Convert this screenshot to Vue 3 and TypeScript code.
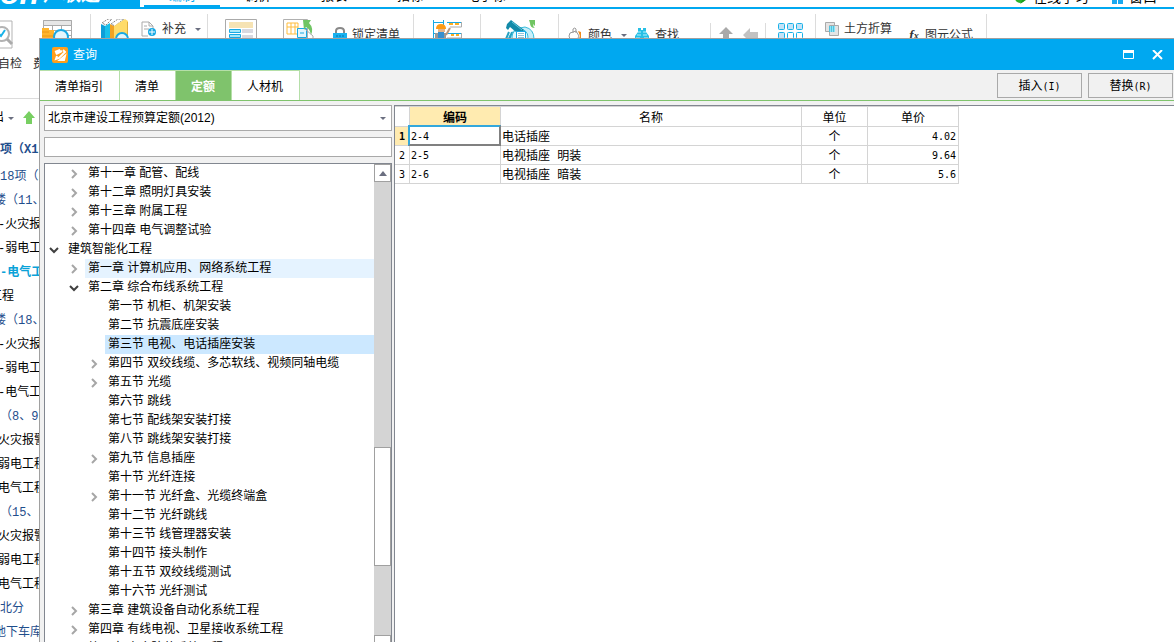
<script setup lang="ts">
import { ref } from 'vue'

interface TreeNode {
  label: string
  level: number
  state: 'open' | 'closed' | 'leaf'
  mark?: 'hover' | 'selected'
}

interface QuotaRow {
  code: string
  name: string
  unit: string
  price: string
}

const menus: string[] = ['编制', '调价', '报表', '指标', '电子标']
const tabs: string[] = ['清单指引', '清单', '定额', '人材机']
const activeTab = ref('定额')
const keyword = ref('')
const library = ref('北京市建设工程预算定额(2012)')

const projectRows: { text: string; kind: string }[] = [
  { text: '项（X1）', kind: 'root' },
  { text: '18项（1）', kind: 'blue' },
  { text: '楼（11、12）', kind: 'blue cut' },
  { text: '-火灾报警', kind: 'dash' },
  { text: '-弱电工程', kind: 'dash' },
  { text: '-电气工程', kind: 'current' },
  { text: '工程', kind: 'deep' },
  { text: '楼（18、19）', kind: 'blue cut' },
  { text: '-火灾报警', kind: 'dash' },
  { text: '-弱电工程', kind: 'dash' },
  { text: '-电气工程', kind: 'dash' },
  { text: '（8、9）', kind: 'blue' },
  { text: '火灾报警', kind: 'dash' },
  { text: '弱电工程', kind: 'dash' },
  { text: '电气工程', kind: 'dash' },
  { text: '（15、16）', kind: 'blue' },
  { text: '火灾报警', kind: 'dash' },
  { text: '弱电工程', kind: 'dash' },
  { text: '电气工程', kind: 'dash' },
  { text: '北分', kind: 'blue' },
  { text: '地下车库', kind: 'blue cut' },
]

const nodes: TreeNode[] = [
  { label: '第十一章 配管、配线', level: 1, state: 'closed' },
  { label: '第十二章 照明灯具安装', level: 1, state: 'closed' },
  { label: '第十三章 附属工程', level: 1, state: 'closed' },
  { label: '第十四章 电气调整试验', level: 1, state: 'closed' },
  { label: '建筑智能化工程', level: 0, state: 'open' },
  { label: '第一章 计算机应用、网络系统工程', level: 1, state: 'closed', mark: 'hover' },
  { label: '第二章 综合布线系统工程', level: 1, state: 'open' },
  { label: '第一节 机柜、机架安装', level: 2, state: 'leaf' },
  { label: '第二节 抗震底座安装', level: 2, state: 'leaf' },
  { label: '第三节 电视、电话插座安装', level: 2, state: 'leaf', mark: 'selected' },
  { label: '第四节 双绞线缆、多芯软线、视频同轴电缆', level: 2, state: 'closed' },
  { label: '第五节 光缆', level: 2, state: 'closed' },
  { label: '第六节 跳线', level: 2, state: 'leaf' },
  { label: '第七节 配线架安装打接', level: 2, state: 'leaf' },
  { label: '第八节 跳线架安装打接', level: 2, state: 'leaf' },
  { label: '第九节 信息插座', level: 2, state: 'closed' },
  { label: '第十节 光纤连接', level: 2, state: 'leaf' },
  { label: '第十一节 光纤盒、光缆终端盒', level: 2, state: 'closed' },
  { label: '第十二节 光纤跳线', level: 2, state: 'leaf' },
  { label: '第十三节 线管理器安装', level: 2, state: 'leaf' },
  { label: '第十四节 接头制作', level: 2, state: 'leaf' },
  { label: '第十五节 双绞线缆测试', level: 2, state: 'leaf' },
  { label: '第十六节 光纤测试', level: 2, state: 'leaf' },
  { label: '第三章 建筑设备自动化系统工程', level: 1, state: 'closed' },
  { label: '第四章 有线电视、卫星接收系统工程', level: 1, state: 'closed' },
  { label: '第五章 安全防范系统工程', level: 1, state: 'closed' },
]

const rows: QuotaRow[] = [
  { code: '2-4', name: '电话插座', unit: '个', price: '4.02' },
  { code: '2-5', name: '电视插座 明装', unit: '个', price: '9.64' },
  { code: '2-6', name: '电视插座 暗装', unit: '个', price: '5.6' },
]
</script>

<template>
  <div class="app">
    <header class="top">
      <div class="brand"><span class="latin">on</span><span>广联达</span></div>
      <nav class="menus">
        <button v-for="(m, i) in menus" :key="m" :class="{ on: i === 0 }">{{ m }}</button>
      </nav>
      <div class="aside">
        <svg width="14" height="12" viewBox="0 0 14 12"><circle cx="6" cy="6" r="5" fill="#2bb32b" /><path d="M6 12l6-4 1-4-4 3z" fill="#1b9a1b" /></svg>
        <button>在线学习</button>
        <svg class="win" width="12" height="12" viewBox="0 0 12 12"><path d="M0 0h5v5H0zM6 0h5v5H6zM0 7h5v5H0zM6 7h5v5H6z" fill="#19a9f0" /></svg>
        <button>窗口</button>
      </div>
    </header>

    <div class="ribbon">
      <div class="group check">
        <button class="big">
          <svg width="32" height="32" viewBox="0 0 32 32"><path d="M1 2h29v27H1z" fill="#fff" stroke="#b3b3b3" /><circle cx="20" cy="15" r="7" fill="#fff" stroke="#b3b3b3" stroke-width="2" /><path d="M25 20l5 5" stroke="#aaa" stroke-width="3" /><path d="M16 14l3 3 4-6" fill="none" stroke="#18b2e8" stroke-width="2" /></svg>
          <span>项目自检</span>
        </button>
        <button class="big">
          <svg width="32" height="32" viewBox="0 0 32 32"><path d="M2.500 1.500h28v26h-28z" fill="#fff" stroke="#aaa" /><path d="M2.500 1.500h28v5h-28z" fill="#e6e6e6" stroke="#aaa" /><path d="M2 11.500h28M2 16.500h28M11.500 7v20M20.500 7v20" stroke="#aaa" /><path d="M1 9h7v2h5v10H1z" fill="#ffb52e" /><path d="M1 13h7M1 17h12" stroke="#ee9612" /><circle cx="20" cy="18" r="7" fill="#e4f6fd" stroke="#18a9e4" stroke-width="2" /></svg>
          <span>费用查看</span>
        </button>
      </div>
      <div class="group books">
        <svg width="30" height="32" viewBox="0 0 30 32"><path d="M0 5l4 2v24H0z" fill="#0d9ed8" /><path d="M4 7l5-3v27H4z" fill="#18c0ea" /><path d="M9 5l4 2v24H9z" fill="#f2a322" /><path d="M1 4l6-4h4L5 6zM10 5l7-5h6l-9 7z" fill="#fff" stroke="#888" stroke-dasharray="2 1" /><path d="M13 7L24 0l3 2v29H13z" fill="#ffdb69" /><path d="M26.500 3v27" stroke="#e0ae3c" /><circle cx="21" cy="20" r="6" fill="#e4f6fd" stroke="#18a9e4" stroke-width="2" /></svg>
        <button class="small add">
          <svg width="16" height="16" viewBox="0 0 16 16"><path d="M1 1h7l4 4v3M1 1v14h6M8 1v4h4M3 5h3M3 8h5" fill="none" stroke="#aaa" /><circle cx="11" cy="11" r="4" fill="#18a9e4" /><path d="M11 8v6M8 11h6" stroke="#fff" /></svg>
          <span>补充</span><i class="caret"></i>
        </button>
      </div>
      <div class="group list">
        <svg width="32" height="32" viewBox="0 0 32 32"><path d="M.5.5h31v31H.5z" fill="#fff" stroke="#aaa" /><path d="M4 3h24v6H4z" fill="#f6e3b4" /><path d="M17 10h11v4H17zM17 16h11v4H17z" fill="#d9d9e0" /><path d="M4.500 10.500h11v3h-11zM4.500 15.500h11v3h-11z" fill="#a4e8fa" stroke="#18a9e4" /></svg>
        <svg class="export" width="32" height="32" viewBox="0 0 32 32"><path d="M.5.5h24v30H.5z" fill="#fff" stroke="#b0b0b0" /><path d="M4 4h11v11H4zM4 8h11M8 4v11M12 4v11" fill="none" stroke="#ffbd3d" /><path d="M14.500 9.500h9v9h-9zM17 14h4" fill="#e4f6fd" stroke="#18a9e4" /><path d="M20 1h8l-2 3q5 5 2 12q-1-6-5-8l-2 3z" fill="#70c563" /><path d="M22 10l8 7v12" fill="none" stroke="#aaa" /></svg>
        <button class="small low">
          <svg width="14" height="16" viewBox="0 0 14 16"><path d="M3 7V4q0-3 4-3t4 3v3" fill="none" stroke="#888" stroke-width="2" /><path d="M0 6h14v10H0z" fill="#18b2f0" /><path d="M3 9h2M6 9h2M9 9h2" stroke="#0c71a8" /></svg>
          <span>锁定清单</span>
        </button>
      </div>
      <div class="group worker">
        <svg width="30" height="32" viewBox="0 0 30 32"><path d="M.5 1v30M10.500 1v8M1 3.500h9M1 14.500h4M14 3.500h14M14 14.500h14" fill="none" stroke="#18a9e4" /><path d="M28.500 3v5H17M28.500 14v5H14" fill="none" stroke="#aaa" /><path d="M16 5h4M22 5h4M18 16h3M23 16h3" stroke="#ffad20" stroke-width="2" /><path d="M3 10q0-5 5-5t5 5z" fill="#ff9b16" /><path d="M5 10h7v3H5z" fill="#e3b48c" /><path d="M2 14h11v12H2z" fill="#999" /><path d="M5 13h6v13H5z" fill="#368fcf" /><path d="M13 16l4-7" stroke="#bb967c" stroke-width="2" /></svg>
      </div>
      <div class="group phone">
        <svg width="32" height="32" viewBox="0 0 32 32"><path d="M3 20Q7 9 20 8q9 2 9 12v10H3z" fill="#c7effa" stroke="#37bcdc" /><circle cx="15" cy="18" r="8" fill="#e3f8fd" stroke="#37bcdc" /><path d="M4 13l-3 7M7 13l-3 8" stroke="#26a2c2" stroke-width="2" /><path d="M2 5L6 1l13 10-3 4-5-2-6-5-2 3-2-2z" fill="#138aa8" /><path d="M7 3l10 8" stroke="#5fc8dc" /><path d="M11.500 12.500h9v15h-9z" fill="#fff" stroke="#18a9e4" /><path d="M14 14v12M16 14v12M18 14v12" stroke="#248aac" stroke-dasharray="1 1" /><path d="M24 1h6v6l-2-2q0 3 2 4q-5 0-5-5z" fill="#70c563" /></svg>
      </div>
      <div class="group find">
        <button class="small low">
          <svg width="15" height="16" viewBox="0 0 15 16"><path d="M2 6l6-2 3 5-3 6H3L1 9zM5 6V2q2-2 3 0v4" fill="#fff" stroke="#999" /><path d="M10 4l3 1v9h-3l2-5z" fill="#f08a1c" /></svg>
          <span>颜色</span><i class="caret"></i>
        </button>
        <button class="small low">
          <svg width="16" height="16" viewBox="0 0 16 16"><path d="M4 1h3v2h2V1h3v4l3 4v6H9v-4H7v4H1V9l3-4z" fill="#26bfe5" /><path d="M4 5h3M9 5h3M3 8h4M9 8h4M2 11h4M10 11h4" stroke="#b9f2ff" /></svg>
          <span>查找</span>
        </button>
      </div>
      <div class="group arrows">
        <svg width="14" height="16" viewBox="0 0 14 16"><path d="M7 0l7 7h-4v9H4V7H0z" fill="#a9a9a9" /></svg>
        <svg width="16" height="16" viewBox="0 0 16 16"><path d="M0 8l7-7v4h8v6H7v4z" fill="#c2c2c2" /></svg>
      </div>
      <div class="group tiles">
        <svg width="26" height="26" viewBox="0 0 26 26"><g fill="#c5e2f6" stroke="#18b2e8"><rect x=".5" y=".5" width="6" height="6" rx="1" /><rect x="9.500" y=".5" width="6" height="6" rx="1" /><rect x="18.500" y=".5" width="6" height="6" rx="1" /><rect x=".5" y="9.500" width="6" height="6" rx="1" /></g><g fill="#fff" stroke="#18b2e8"><rect x="9.500" y="9.500" width="6" height="6" rx="1" /><rect x="18.500" y="9.500" width="6" height="6" rx="1" /></g></svg>
      </div>
      <div class="group earth">
        <button class="small">
          <svg width="14" height="16" viewBox="0 0 14 16"><path d="M.5 1.500h9v9h-9zM4.500 4.500h9v10h-9z" fill="#e4e4e4" stroke="#aaa" /><path d="M4 5h6v6H4z" fill="#8fe5f7" /><path d="M4 6h6M4 8h6M4 10h6" stroke="#149fc4" stroke-dasharray="1 1" /></svg>
          <span>土方折算</span>
        </button>
        <button class="small low">
          <em class="fx">f<sub>x</sub></em>
          <span>图元公式</span>
        </button>
      </div>
    </div>

    <aside class="project">
      <div class="bar">
        <span>出</span><i class="caret"></i>
        <svg width="12" height="14" viewBox="0 0 12 14"><path d="M6 0l6 7H9v6H3V7H0z" fill="#78cf62" /></svg>
      </div>
      <ul>
        <li v-for="(r, i) in projectRows" :key="i" :class="r.kind">{{ r.text }}</li>
      </ul>
    </aside>

    <section class="dialog" role="dialog" aria-labelledby="dialog-title">
      <div class="title">
        <svg width="16" height="16" viewBox="0 0 16 16"><rect width="16" height="16" rx="2" fill="#ff9f1c" /><path d="M3 5l5-2-4 4 6-3M11 3l2 2-6 6-3 1 1-3M8 13l5-4-1 4z" fill="none" stroke="#fff" stroke-width="2" /></svg>
        <h1 id="dialog-title">查询</h1>
        <button aria-label="最大化"><svg width="12" height="10" viewBox="0 0 12 10"><path d="M.5.5h10v8H.5z" fill="none" stroke="#fff" /><path d="M0 0h11v3H0z" fill="#fff" /></svg></button>
        <button aria-label="关闭"><svg width="12" height="10" viewBox="0 0 12 10"><path d="M1 0l9 9M10 0L1 9" stroke="#fff" stroke-width="2" /></svg></button>
      </div>

      <div class="tabrow">
        <div class="tabs" role="tablist">
          <button v-for="t in tabs" :key="t" role="tab" :aria-selected="t === activeTab" :class="{ active: t === activeTab }" @click="activeTab = t">{{ t }}</button>
        </div>
        <div class="actions">
          <button>插入<span class="mono">(I)</span></button>
          <button>替换<span class="mono">(R)</span></button>
        </div>
      </div>

      <div class="body">
        <div class="left">
          <div class="combo">
            <select v-model="library" aria-label="定额库">
              <option>北京市建设工程预算定额(2012)</option>
            </select>
            <i class="caret"></i>
          </div>
          <input v-model="keyword" class="search" type="text" aria-label="查询内容" />
          <div class="tree">
            <ul role="tree">
              <li v-for="n in nodes" :key="n.label" role="treeitem" :class="['l' + n.level, n.mark]">
                <svg v-if="n.state === 'closed'" width="10" height="10" viewBox="0 0 10 10"><path d="M3 1l4 4-4 4" fill="none" stroke="#a6a6a6" stroke-width="2" /></svg>
                <svg v-else-if="n.state === 'open'" width="10" height="10" viewBox="0 0 10 10"><path d="M1 3l4 4 4-4" fill="none" stroke="#404040" stroke-width="2" /></svg>
                <span v-else class="blank"></span>
                <span class="text">{{ n.label }}</span>
              </li>
            </ul>
            <div class="scroll">
              <button class="up" aria-label="向上滚动"></button>
              <div class="track before"></div>
              <div class="thumb"></div>
              <div class="track after"></div>
              <button class="down" aria-label="向下滚动"></button>
            </div>
          </div>
        </div>

        <div class="right">
          <table>
            <colgroup><col class="c-no" /><col class="c-code" /><col class="c-name" /><col class="c-unit" /><col class="c-code" /></colgroup>
            <thead>
              <tr><th></th><th class="key">编码</th><th>名称</th><th>单位</th><th>单价</th></tr>
            </thead>
            <tbody>
              <tr v-for="(r, i) in rows" :key="r.code">
                <th class="mono" :class="{ here: i === 0 }">{{ i + 1 }}</th>
                <td class="mono" :class="{ focus: i === 0 }">{{ r.code }}</td>
                <td class="name">{{ r.name }}</td>
                <td class="unit">{{ r.unit }}</td>
                <td class="mono price">{{ r.price }}</td>
              </tr>
            </tbody>
          </table>
        </div>
      </div>
    </section>
  </div>
</template>

<style>
html,
body {
  margin: 0;
  overflow: hidden;
}
</style>

<style scoped>
.app {
  position: relative;
  height: 100vh;
  overflow: hidden;
  background: #fff;
  color: #000;
  font: 12px/18px "Liberation Sans", "Noto Sans CJK SC", sans-serif;
}
.app * {
  box-sizing: border-box;
}
button {
  padding: 0;
  border: 0;
  background: none;
  color: inherit;
  font: inherit;
  white-space: nowrap;
}
svg {
  display: block;
  flex: none;
}
ul {
  margin: 0;
  padding: 0;
  list-style: none;
}
.mono {
  font-family: "DejaVu Sans Mono", "Noto Sans CJK SC", monospace;
  font-size: 10px;
}
.caret {
  flex: none;
  border: 3px solid transparent;
  border-top-color: #6b6f80;
  border-bottom: 0;
}

.top {
  display: flex;
  align-items: flex-end;
  height: 9px;
  overflow: hidden;
  border-bottom: 2px solid #00a8f0;
}
.brand {
  display: flex;
  align-items: flex-end;
  gap: 4px;
  width: 140px;
  height: 30px;
  padding-bottom: 2px;
  background: #00a8f0;
  color: #fff;
  font-size: 19px;
  font-style: italic;
  font-weight: bold;
  line-height: 20px;
}
.brand .latin {
  font-size: 32px;
  line-height: 24px;
}
.menus {
  display: flex;
  margin-left: 4px;
}
.menus button {
  width: 76px;
  height: 18px;
  padding-bottom: 4px;
  font-size: 13px;
  line-height: 14px;
}
.menus .on {
  border-bottom: 2px solid #00a8f0;
  padding-bottom: 2px;
  color: #00a8f0;
}
.aside {
  display: flex;
  align-items: flex-end;
  gap: 5px;
  margin-left: auto;
  padding: 0 17px 3px 0;
  font-size: 14px;
  line-height: 14px;
}
.aside .win {
  margin-left: 18px;
}

.ribbon {
  display: flex;
  height: 90px;
  padding-top: 5px;
  border-bottom: 1px solid #dcdcdc;
  color: #333;
}
.group {
  display: flex;
  flex: none;
  align-items: flex-start;
  padding-top: 5px;
  border-right: 1px solid #dcdcdc;
}
.big {
  display: flex;
  flex-direction: column;
  align-items: center;
  gap: 4px;
}
.small {
  display: flex;
  align-items: center;
  gap: 5px;
  height: 20px;
}
.low {
  margin-top: 6px;
}
.check {
  gap: 11px;
  width: 117px;
  margin-left: -26px;
}
.books {
  gap: 10px;
  width: 117px;
  padding-left: 10px;
}
.add .caret {
  margin-left: 4px;
}
.list {
  width: 206px;
  padding-left: 17px;
  gap: 18px;
}
.export {
  margin-left: 8px;
}
.worker {
  width: 67px;
  padding-left: 19px;
}
.phone {
  width: 78px;
  padding-left: 24px;
}
.find {
  gap: 7px;
  width: 151px;
  padding-left: 9px;
  border-right-color: #fff;
}
.find .caret {
  margin-left: 4px;
}
.arrows {
  gap: 10px;
  width: 56px;
  margin-top: 9px;
  padding: 4px 0 0 8px;
  border-left: 1px solid #dcdcdc;
}
.tiles {
  width: 50px;
  padding: 9px 0 0 12px;
}
.earth {
  gap: 16px;
  width: 171px;
  padding-left: 9px;
}
.fx {
  width: 12px;
  font: italic bold 13px/18px "Liberation Serif", serif;
}
.fx sub {
  font-size: 10px;
  line-height: 10px;
  vertical-align: baseline;
}

.project {
  width: 40px;
  overflow: hidden;
  font-family: "Liberation Mono", "Noto Sans CJK SC", monospace;
}
.bar {
  display: flex;
  align-items: center;
  height: 38px;
  margin-left: -8px;
}
.bar .caret {
  margin: 0 9px 0 4px;
}
.project li {
  height: 24px;
  line-height: 26px;
  white-space: nowrap;
}
.project .root {
  height: 27px;
  color: #1f4e8c;
  font-weight: bold;
}
.project .blue {
  color: #1f4e8c;
}
.project .cut {
  text-indent: -6px;
}
.project .dash {
  text-indent: -2px;
}
.project .deep {
  text-indent: -10px;
}
.project .current {
  color: #0aa2d8;
  font-weight: bold;
}

.dialog {
  position: absolute;
  inset: 38px 0 0 39px;
  display: flex;
  flex-direction: column;
  border: 1px solid #a0a0a0;
  border-width: 1px 0 0 1px;
  background: #f1f1f1;
}
.title {
  display: flex;
  flex: none;
  align-items: center;
  gap: 17px;
  height: 31px;
  padding: 0 10px 0 12px;
  background: #00a8f0;
  color: #fff;
}
.title h1 {
  flex: 1;
  margin: 0 0 0 -12px;
  font-size: 12px;
  font-weight: normal;
}
.tabrow {
  display: flex;
  flex: none;
  justify-content: space-between;
  height: 31px;
  border-bottom: 1px solid #7fc36c;
}
.tabs {
  display: flex;
  border-top: 1px solid #b5dfa8;
  background: #fff;
}
.tabs button {
  padding: 3px 16px 0 15px;
  border-right: 1px solid #b5dfa8;
}
.tabs .active {
  background: #7fc36c;
  color: #fff;
  font-weight: bold;
}
.actions {
  display: flex;
  gap: 6px;
  padding: 3px 1px 2px 0;
}
.actions button {
  width: 85px;
  padding-top: 1px;
  border: 1px solid #a9a9a9;
}

.body {
  display: flex;
  flex: 1;
  gap: 2px;
  min-height: 0;
  padding: 4px 0 0 4px;
}
.left {
  display: flex;
  flex: none;
  flex-direction: column;
  width: 348px;
}
.combo {
  display: flex;
  align-items: center;
  height: 26px;
  padding-right: 5px;
  border: 1px solid #a9a9a9;
  background: #fff;
}
.combo select {
  flex: 1;
  height: 24px;
  padding: 0 3px;
  border: 0;
  outline: 0;
  background: transparent;
  color: #000;
  font: inherit;
  appearance: none;
}
.search {
  flex: none;
  width: 100%;
  height: 20px;
  margin: 6px 0;
  border: 1px solid #a9a9a9;
  outline: 0;
  background: #fff;
  font: inherit;
}
.tree {
  display: flex;
  flex: 1;
  min-height: 0;
  border: 1px solid #828790;
  border-bottom: 0;
  background: #fff;
}
.tree ul {
  flex: 1;
  overflow: hidden;
}
.tree li {
  display: flex;
  align-items: center;
  height: 19px;
  padding-left: 4px;
}
.tree .l1 {
  padding-left: 24px;
}
.tree .l2 {
  padding-left: 44px;
}
.blank {
  width: 10px;
}
.text {
  flex: 1;
  margin-left: 6px;
  padding-left: 3px;
  line-height: 19px;
  white-space: nowrap;
}
.hover .text {
  background: #e5f3ff;
}
.selected .text {
  background: #cce8ff;
}
.scroll {
  display: flex;
  flex: none;
  flex-direction: column;
  width: 17px;
}
.up,
.down,
.thumb {
  flex: none;
  border: 1px solid #a0a0a0;
  background: #fff;
}
.up {
  display: flex;
  align-items: center;
  justify-content: center;
  height: 18px;
}
.up::before {
  content: "";
  border: 4px solid transparent;
  border-top: 0;
  border-bottom: 5px solid #6b6f80;
}
.track {
  background: #d4d4d4;
}
.before {
  flex: 265;
}
.thumb {
  height: 119px;
}
.after {
  flex: 69;
}
.down {
  height: 7px;
  border-bottom: 0;
}

.right {
  flex: 1;
  min-width: 0;
  border: 1px solid #828790;
  border-width: 1px 0 0 1px;
  background: #fff;
}
table {
  width: 564px;
  border-spacing: 0;
  table-layout: fixed;
}
.c-no {
  width: 15px;
}
.c-code {
  width: 91px;
}
.c-name {
  width: 301px;
}
.c-unit {
  width: 66px;
}
th,
td {
  height: 19px;
  padding: 2px 0 0;
  border: 1px solid #d4d4d4;
  border-width: 0 1px 1px 0;
  font-weight: normal;
  line-height: 16px;
  text-align: center;
}
thead th {
  height: 21px;
  border-top-width: 1px;
}
.key {
  background: #ffebb0;
  font-weight: bold;
}
.here {
  background: #ffebb0;
  font-weight: bold;
}
td.mono {
  padding: 2px 1px 0;
  text-align: left;
}
td.price {
  padding: 2px 2px 0;
  text-align: right;
}
td.name {
  padding-left: 1px;
  font-family: "DejaVu Sans Mono", "Noto Sans CJK SC", monospace;
  text-align: left;
}
.focus {
  position: relative;
}
.focus::after {
  content: "";
  position: absolute;
  inset: -2px -1px -1px -2px;
  border: 2px solid #808080;
  border-top-color: #33a8dc;
  border-left-color: #33a8dc;
}
</style>
